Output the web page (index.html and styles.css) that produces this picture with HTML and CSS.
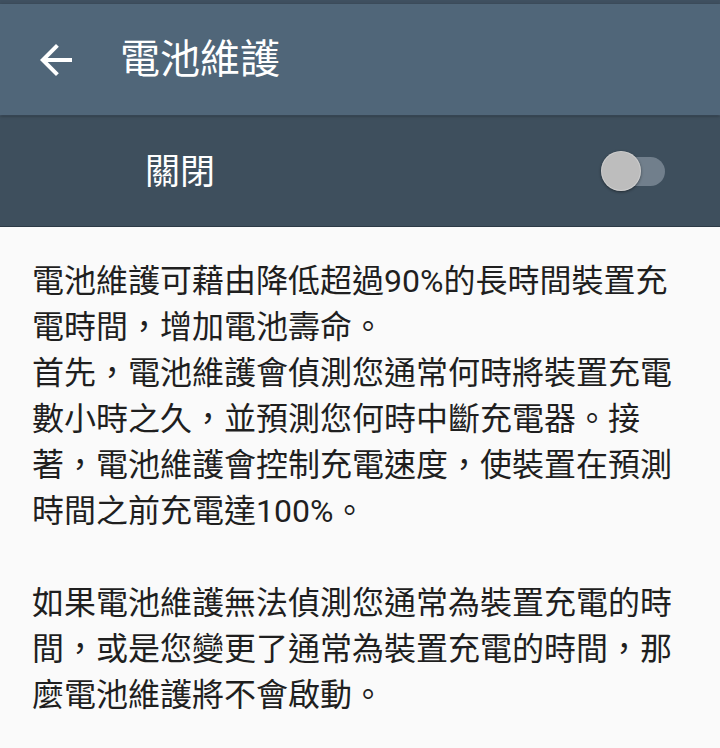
FILE: index.html
```html
<!DOCTYPE html>
<html lang="zh-Hant">
<head>
<meta charset="utf-8">
<title>電池維護</title>
<link rel="stylesheet" href="styles.css">
</head>
<body>
<div class="screen">
  <div class="status-edge"></div>
  <header class="appbar">
    <svg class="back" viewBox="0 0 24 24" width="48" height="48" aria-hidden="true">
      <path d="M20 11H7.83l5.59-5.59L12 4l-8 8 8 8 1.41-1.41L7.83 13H20v-2z" fill="#ffffff"/>
    </svg>
    <h1 class="title">電池維護</h1>
  </header>
  <div class="switch-row">
    <span class="switch-label">關閉</span>
    <span class="switch">
      <span class="track"></span>
      <span class="thumb"></span>
    </span>
  </div>
  <main class="content">
    <p class="para">電池維護可藉由降低超過90%的長時間裝置充<br>電時間，增加電池壽命。<br>首先，電池維護會偵測您通常何時將裝置充電<br>數小時之久，並預測您何時中斷充電器。接<br>著，電池維護會控制充電速度，使裝置在預測<br>時間之前充電達100%。</p>
    <p class="para para-gap">如果電池維護無法偵測您通常為裝置充電的時<br>間，或是您變更了通常為裝置充電的時間，那<br>麼電池維護將不會啟動。</p>
  </main>
</div>
</body>
</html>
```
FILE: styles.css
```css
* { box-sizing: border-box; }

html, body {
  margin: 0;
  padding: 0;
  background: #fafafa;
}

body {
  font-family: Roboto, "Noto Sans CJK TC", "Noto Sans", sans-serif;
  width: 720px;
  height: 748px;
  overflow: hidden;
}

.screen {
  display: flex;
  flex-direction: column;
  width: 720px;
}

.status-edge {
  height: 4px;
  background: #3f5060;
}

.appbar {
  position: relative;
  z-index: 2;
  height: 111px;
  background: #506679;
  display: flex;
  align-items: center;
  padding-left: 32px;
  gap: 40px;
  box-shadow: 0 1px 3px rgba(0, 0, 0, 0.35);
}

.back {
  display: block;
  flex: none;
}

.title {
  margin: 0;
  color: #ffffff;
  font-size: 40px;
  font-weight: 400;
  line-height: 1;
  letter-spacing: 0;
}

.switch-row {
  height: 112px;
  background: #3e4f5d;
  border-top: 1px solid #46586a;
  border-bottom: 1px solid #2c3a46;
  display: flex;
  align-items: center;
  justify-content: space-between;
  padding-left: 145px;
  padding-right: 55px;
}

.switch-label {
  color: #ffffff;
  font-size: 35px;
  line-height: 1;
  margin-top: 2px;
}

.switch {
  position: relative;
  width: 64px;
  height: 40px;
  flex: none;
}

.track {
  position: absolute;
  left: 8px;
  right: 0;
  top: 6px;
  height: 29px;
  border-radius: 15px;
  background: #717f8c;
}

.thumb {
  position: absolute;
  left: 0;
  top: 0;
  width: 40px;
  height: 40px;
  border-radius: 50%;
  background: #bdbdbd;
  box-shadow: 0 1px 3px rgba(0, 0, 0, 0.45), inset 0 0 0 1px rgba(255, 255, 255, 0.25);
}

.content {
  padding: 31px 33px 0 32px;
  color: #1f1f1f;
}

.para {
  margin: 0;
  font-size: 32px;
  line-height: 46px;
  white-space: nowrap;
}

.para-gap {
  margin-top: 46px;
}
```
